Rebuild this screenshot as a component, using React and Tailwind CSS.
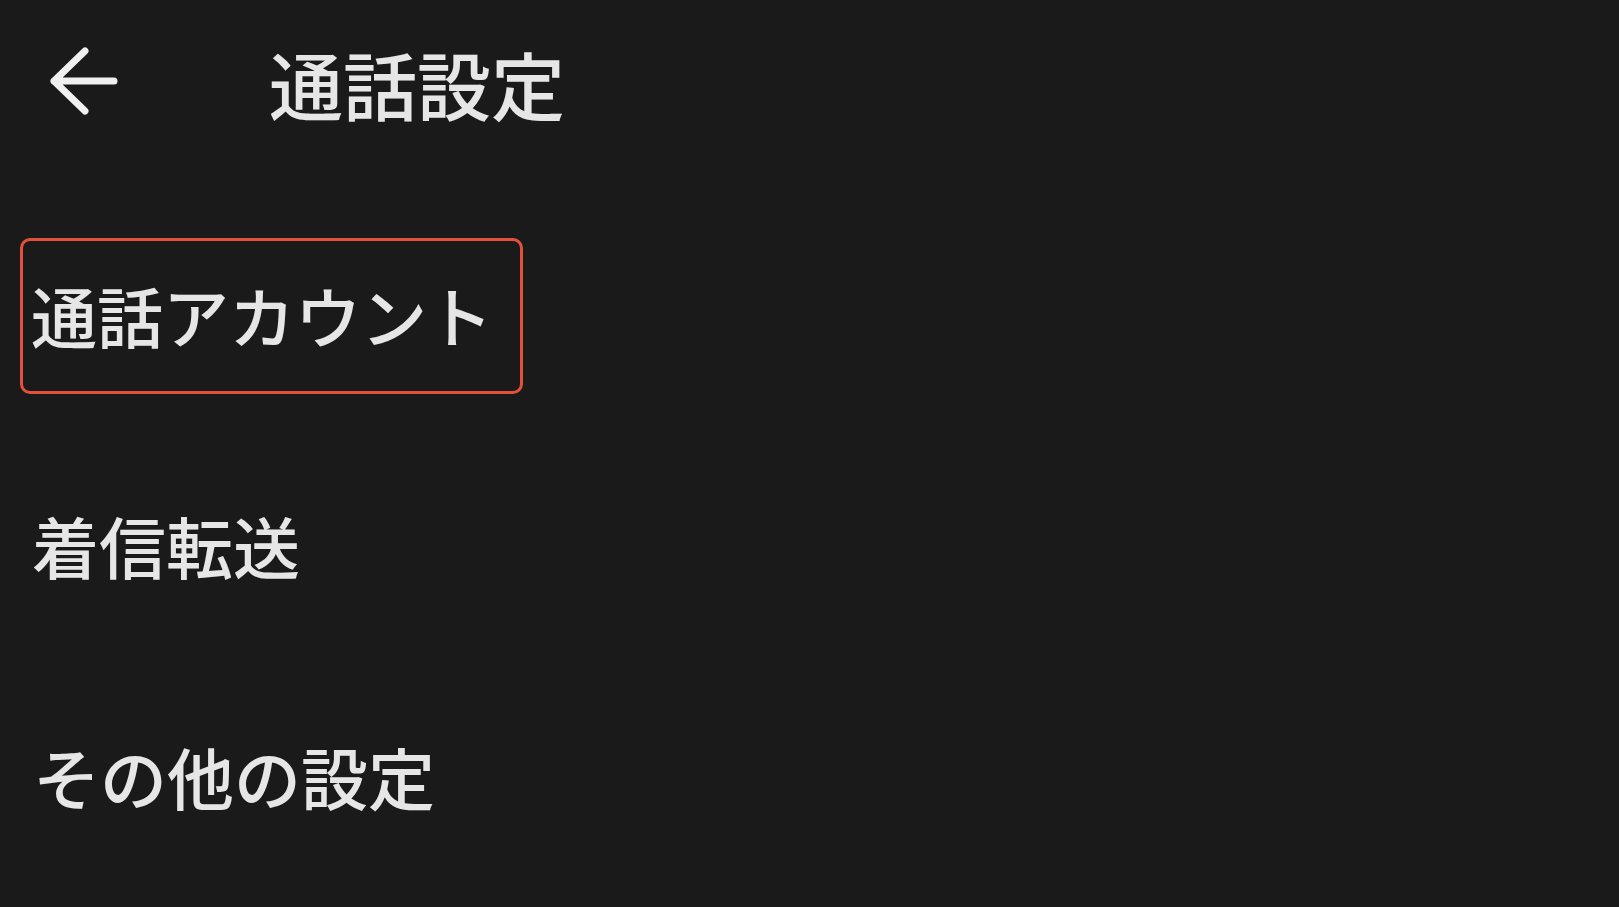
export default function App() {
  const font = { fontFamily: '"Noto Sans CJK JP", "Noto Sans", sans-serif' };
  return (
    <div className="w-[1619px] h-[907px] bg-[#1a1a1a] text-[#e6e6e6] overflow-hidden font-medium" style={font}>
      <div className="h-[172px] flex items-center">
        <svg className="ml-[44px] self-start mt-[44px] shrink-0" width="78" height="74" viewBox="0 0 78 74" fill="none">
          <path d="M10 37 L41 7 M10 37 L41 67 M10 37 L70 37" stroke="#f0f0f0" strokeWidth="7" strokeLinecap="round" strokeLinejoin="round" />
        </svg>
        <div className="ml-[147px] mb-[6px] text-[74px] leading-none">通話設定</div>
      </div>
      <div className="pt-[30px] flex flex-col">
        <div className="h-[228px] flex items-center">
          <div className="ml-[20px] w-[503px] h-[156px] border-[3px] border-[#e3513c] rounded-[10px] flex items-center pl-[8px] pb-[4px]">
            <span className="text-[66px] leading-none">通話アカウント</span>
          </div>
        </div>
        <div className="h-[228px] flex items-center pl-[32px]">
          <span className="text-[67px] leading-none">着信転送</span>
        </div>
        <div className="h-[234px] flex items-center pl-[33px]">
          <span className="text-[67px] leading-none">その他の設定</span>
        </div>
      </div>
    </div>
  );
}
